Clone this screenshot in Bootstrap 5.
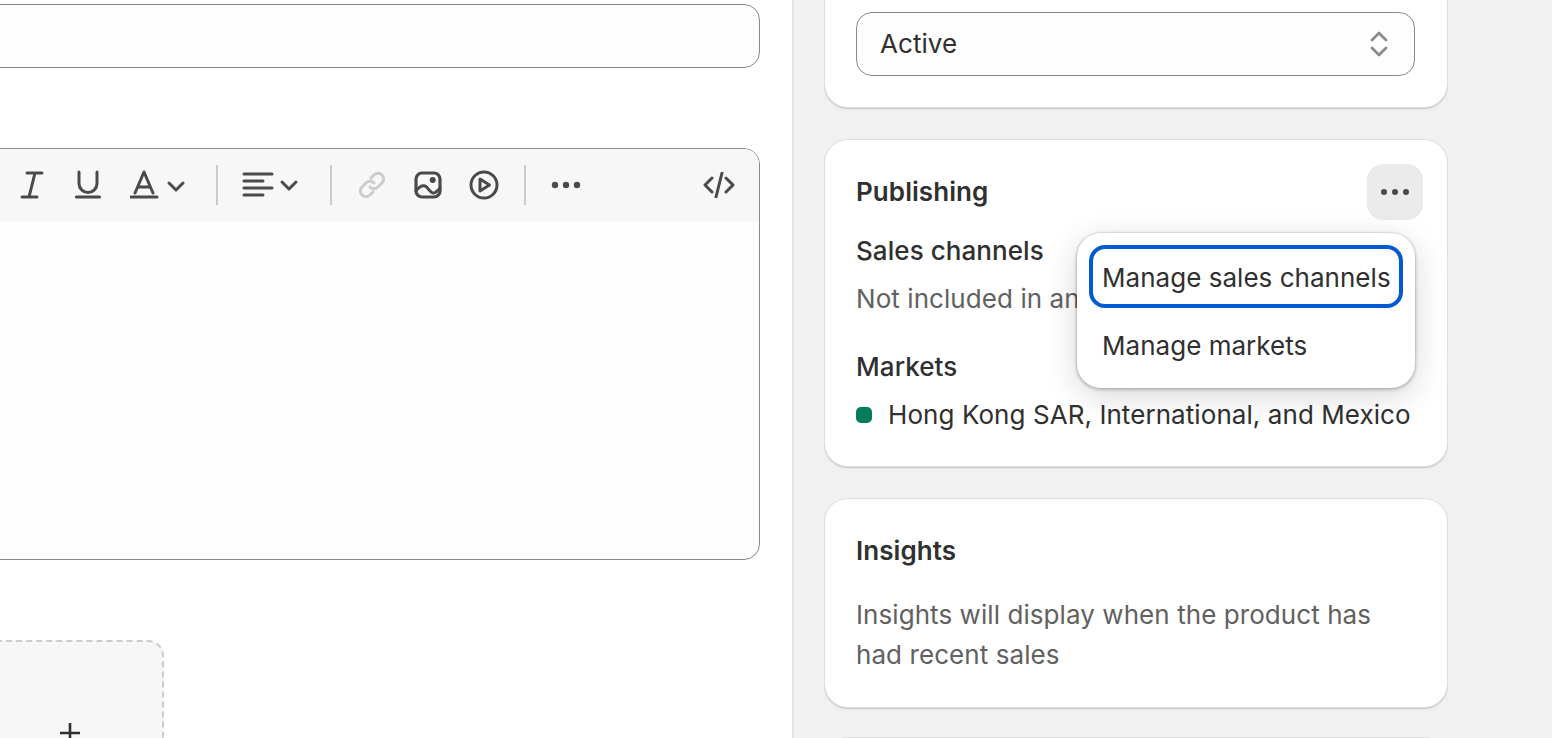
<!DOCTYPE html>
<html lang="en">
<head>
<meta charset="utf-8">
<title>Product</title>
<link href="https://cdn.jsdelivr.net/npm/bootstrap@5.3.0/dist/css/bootstrap.min.css" rel="stylesheet">
<style>
html,body{height:738px;overflow:hidden}
body{background:#f1f1f1;font-family:Inter,"Liberation Sans",sans-serif;font-size:26px;line-height:40px;color:#303030;letter-spacing:.07px}
.shell{height:738px;overflow:hidden}
.main-pane{width:794px;flex:none;background:#fff;border-right:2px solid #e3e3e3;overflow:hidden;height:738px;padding-top:4px}
.side-pane{width:624px;margin-left:30px;flex:none;height:738px;overflow:hidden}
.field-box{margin-left:-40px;width:800px;height:64px;border:1px solid #8a8a8a;border-radius:16px;background:#fdfdfd}
.editor-box{margin-left:-40px;width:800px;height:412px;margin-top:80px;border:1px solid #8a8a8a;border-radius:16px;background:#fdfdfd;overflow:hidden}
.tool-strip{height:72px;background:#f7f7f7;padding:0 24px 0 57px}
.tool-strip svg{display:block;flex:none;fill:none;stroke:#4a4a4a;stroke-width:3;stroke-linecap:round;stroke-linejoin:round}
.tool-strip svg.tool-off{stroke:#cccccc}
.tool-sep{width:2px;height:40px;background:#cccccc;flex:none}
.gap-a{margin-left:28px}
.gap-b{margin-left:24px}
.gap-c{margin-left:30px}
.gap-d{margin-left:25px}
.gap-e{margin-left:27px}
.drop-zone{margin-left:-40px;width:204px;height:200px;margin-top:80px;border:2px dashed #cccccc;border-radius:16px;background:#f7f7f7;padding-top:80px}
.drop-zone svg{display:block;margin-left:97px;stroke:#303030;stroke-width:2.6;fill:none}
.pane-card{--bs-card-border-width:0;border-radius:24px;background:#fff;box-shadow:0 1px 0 rgba(0,0,0,.13),inset 0 0 0 1px rgba(0,0,0,.12),0 2px 3px rgba(0,0,0,.05);padding:33px 32px 32px}
.status-card{height:136px;margin-top:-28px;padding-top:40px}
.status-select{height:64px;width:559px;font-size:26px;line-height:40px;letter-spacing:.07px;color:#303030;padding:11px 23px;border:1px solid #8a8a8a;border-radius:16px;background-color:#fdfdfd;--bs-form-select-bg-img:url("data:image/svg+xml,%3csvg xmlns='http://www.w3.org/2000/svg' viewBox='0 0 20 28'%3e%3cpath fill='none' stroke='%238a8a8a' stroke-width='2.8' stroke-linecap='round' stroke-linejoin='round' d='M3 10l7-7 7 7M3 18l7 7 7-7'/%3e%3c/svg%3e");background-position:right 25px center;background-size:20px 28px}
.publish-card{height:328px;margin-top:31px}
.insight-card{height:210px;margin-top:31px}
.tail-card{height:40px;margin-top:29px}
.card-heading{font-size:26px;line-height:40px;font-weight:600;margin:0;color:#303030}
.sub-heading{font-size:26px;line-height:40px;font-weight:550;margin:0;color:#303030}
.sales-head{margin-top:11px}
.markets-head{margin-top:28px}
.muted-line{color:#616161;margin:0}
.more-btn{width:56px;height:56px;padding:0;border:0;border-radius:16px;background:#ebebeb;margin:-8px -7px 0 0;--bs-btn-hover-bg:#ebebeb}
.market-dot{width:16px;height:16px;border-radius:5px;background:#047b5d;flex:none}
.menu-pop{position:absolute;left:253px;top:94px;width:338px;height:155px;border:0;border-radius:24px;background:#fff;padding:12px;box-shadow:0 8px 32px rgba(0,0,0,.16),0 1px 3px 1px rgba(0,0,0,.2),0 0 0 1px rgba(0,0,0,.04);font-size:26px;color:#303030;display:block;letter-spacing:.03px}
.menu-pop .dropdown-item{height:63px;line-height:57px;color:#303030;background:none;border:4px solid #005bd3;border-radius:16px;padding:0 9px}
.menu-pop li+li .dropdown-item{margin-top:6px;padding:0 13px;border:0;line-height:63px}
</style>
</head>
<body>
<div class="shell d-flex">
  <div class="main-pane">
    <div class="field-box"></div>
    <div class="editor-box">
      <div class="tool-strip d-flex align-items-center">
        <svg width="28" height="32" viewBox="0 0 28 32"><path d="M9 4h15M4 28h15M17 4l-6 24"/></svg>
        <svg width="28" height="32" viewBox="0 0 28 32" class="gap-a"><path d="M5 3v11.500a9 9 0 0 0 18 0V3"/><path d="M2.500 28h23" stroke-width="3.200"/></svg>
        <svg width="58" height="32" viewBox="0 0 58 32" class="gap-a"><path d="M5 24L14 3l9 21M7.500 18h13"/><path d="M1 28h26" stroke-width="3.200"/><path d="M39 14l7 7 7-7"/></svg>
        <span class="tool-sep gap-a"></span>
        <svg width="58" height="28" viewBox="0 0 58 28" class="gap-b"><path d="M2 3h28M2 10h19M2 17h28M2 24h19"/><path d="M40 11l7 7 7-7"/></svg>
        <span class="tool-sep gap-c"></span>
        <svg width="30" height="30" viewBox="0 0 30 30" class="gap-d tool-off"><path d="M14 8l3-3a5.500 5.500 0 0 1 8 8l-4 4a5.500 5.500 0 0 1-8 0M16 22l-3 3a5.500 5.500 0 0 1-8-8l4-4a5.500 5.500 0 0 1 8 0"/></svg>
        <svg width="28" height="28" viewBox="0 0 28 28" class="gap-e"><rect x="2" y="2" width="24" height="24" rx="6" stroke-width="3.200"/><path d="M2 20C5 16 8 14 11 15C14 16 16 22 19.500 22C22 22 24 19 26 17"/><circle cx="18.700" cy="9" r="3" fill="#4a4a4a" stroke="none"/></svg>
        <svg width="30" height="30" viewBox="0 0 30 30" class="gap-e"><circle cx="15" cy="15" r="13"/><path d="M11 9l9.500 6-9.500 6z"/></svg>
        <span class="tool-sep gap-d"></span>
        <svg width="30" height="8" viewBox="0 0 30 8" class="gap-d"><g fill="#4a4a4a" stroke="none"><circle cx="4" cy="4" r="3.200"/><circle cx="15" cy="4" r="3.200"/><circle cx="26" cy="4" r="3.200"/></g></svg>
        <svg width="32" height="26" viewBox="0 0 32 26" class="ms-auto"><path d="M9 6l-7 7 7 7M23 6l7 7-7 7M19 1l-6 24"/></svg>
      </div>
    </div>
    <div class="drop-zone"><svg width="22" height="22" viewBox="0 0 22 22"><path d="M11 1v20M1 11h20"/></svg></div>
  </div>
  <div class="side-pane">
    <div class="card pane-card status-card">
      <select class="form-select status-select" aria-label="Status"><option>Active</option></select>
    </div>
    <div class="card pane-card publish-card position-relative">
      <div class="d-flex justify-content-between align-items-start">
        <h2 class="card-heading">Publishing</h2>
        <button type="button" class="btn more-btn d-flex align-items-center justify-content-center" aria-label="More"><svg width="30" height="8" viewBox="0 0 30 8"><g fill="#4a4a4a"><circle cx="4" cy="4" r="3"/><circle cx="15" cy="4" r="3"/><circle cx="26" cy="4" r="3"/></g></svg></button>
      </div>
      <h3 class="sub-heading sales-head">Sales channels</h3>
      <p class="muted-line mt-2">Not included in any sales channels</p>
      <h3 class="sub-heading markets-head">Markets</h3>
      <div class="d-flex align-items-center gap-3 mt-2"><span class="market-dot"></span><span class="text-nowrap">Hong Kong SAR, International, and Mexico</span></div>
      <ul class="dropdown-menu show menu-pop list-unstyled">
        <li><a class="dropdown-item" href="#">Manage sales channels</a></li>
        <li><a class="dropdown-item" href="#">Manage markets</a></li>
      </ul>
    </div>
    <div class="card pane-card insight-card">
      <h2 class="card-heading">Insights</h2>
      <p class="muted-line mt-4">Insights will display when the product has had recent sales</p>
    </div>
    <div class="card pane-card tail-card"></div>
  </div>
</div>
</body>
</html>
